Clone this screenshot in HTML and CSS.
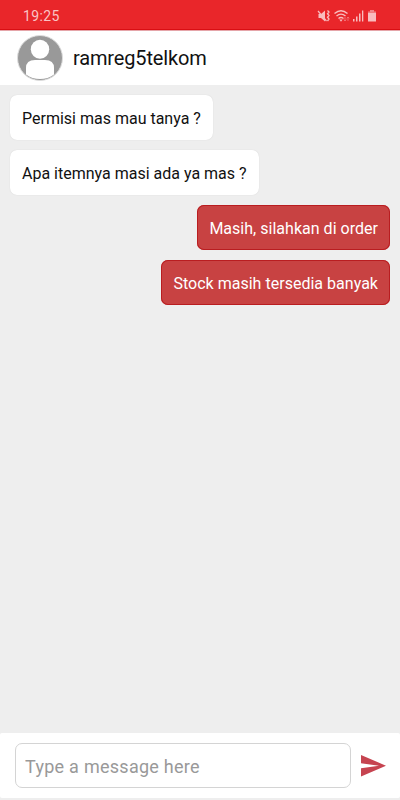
FILE: index.html
```html
<!DOCTYPE html>
<html lang="id">
<head>
  <meta charset="UTF-8">
  <meta name="viewport" content="width=device-width, initial-scale=1.0">
  <title>Chat</title>
  <link rel="stylesheet" href="styles.css">
</head>
<body>
  <div class="status-bar">
    <span class="time">19:25</span>
    <svg class="status-icons" width="62" height="14" viewBox="0 0 62 14" fill="#f9bcbe">
      <!-- muted -->
      <path d="M1.500 5H4l4-3.500v11L4 9H1.500z"/>
      <path d="M1 2l8.500 10" fill="none" stroke="#f9bcbe" stroke-width="1.200"/>
      <path d="M10.500 1.500L12 3l-1.500 1.700L12 6.500l-1.500 1.700L12 10l-1.500 2" fill="none" stroke="#f9bcbe" stroke-width="1.300"/>
      <!-- wifi -->
      <g fill="none" stroke="#f9bcbe" stroke-width="1.400">
        <path d="M17.500 4.500q6.500-5.500 13 0M19.500 7q4.500-3.700 9 0M21.500 9.500q2.500-2 5 0"/>
      </g>
      <path d="M22.300 10.500h3.400L24 12.700z"/>
      <path d="M28 8v4m-1.300-1.300L28 12l1.300-1.300M31 12V8m-1.300 1.300L31 8l1.300 1.300" fill="none" stroke="#f17a7d" stroke-width=".8"/>
      <!-- signal -->
      <path d="M36 10h1.500v2.500H36zM39 7.500h1.500v5H39zM42 4.500h1.500v8H42zM45 1.500h1.300v11H45z"/>
      <!-- battery -->
      <path d="M51 3.500h8v9h-8z"/>
      <path d="M53 1h4v1.500h2v1h-8v-1h2z" fill="#f28588"/>
    </svg>
  </div>

  <header class="chat-header">
    <svg class="avatar" width="46" height="46" viewBox="0 0 46 46">
      <circle cx="23" cy="23" r="22.500" fill="#999" stroke="#ddd"/>
      <ellipse cx="23" cy="14.200" rx="9.200" ry="9.500" fill="#fff"/>
      <path d="M9 39.500V33q0-8 9-8h10q9 0 9 8v6.500q-6 4.500-14 4.500T9 39.500z" fill="#fff"/>
    </svg>
    <h1>ramreg5telkom</h1>
  </header>

  <main class="messages">
    <div class="message">Permisi mas mau tanya ?</div>
    <div class="message">Apa itemnya masi ada ya mas ?</div>
    <div class="message sent">Masih, silahkan di order</div>
    <div class="message sent">Stock masih tersedia banyak</div>
  </main>

  <form class="composer">
    <input type="text" placeholder="Type a message here">
    <button type="button" aria-label="Send">
      <svg width="25" height="22" viewBox="0 0 25 22" fill="#c64450">
        <path d="M0 0l25 10.700L0 21.500v-8.300l18-2.500L0 8.200z"/>
      </svg>
    </button>
  </form>
</body>
</html>
```
FILE: styles.css
```css
* {
  box-sizing: border-box;
}

body {
  display: flex;
  flex-direction: column;
  height: 100vh;
  margin: 0;
  overflow: hidden;
  background: #eee;
  font-family: Roboto, sans-serif;
}

.status-bar {
  display: flex;
  align-items: center;
  justify-content: space-between;
  height: 30px;
  padding: 2px 20px 0 23px;
  background: #e9262a;
  border-bottom: 1px solid #d90e13;
}

.time {
  color: #fac4c5;
  font-size: 14px;
  letter-spacing: 0.4px;
}

.status-icons {
  margin-right: 1px;
}

.chat-header {
  display: flex;
  align-items: center;
  height: 55px;
  padding: 0 17px;
  background: #fff;
  border-top: 1px solid #e5a5a9;
}

.chat-header h1 {
  margin: 0 0 0 10px;
  color: #111;
  font-size: 20px;
  font-weight: 400;
  letter-spacing: -0.15px;
}

.messages {
  display: flex;
  flex: 1;
  flex-direction: column;
  align-items: flex-start;
  gap: 10px;
  padding: 10px;
}

.message {
  height: 45px;
  padding: 0 12px;
  background: #fff;
  border-radius: 7px;
  box-shadow: 0 0 1px #ccc;
  color: #111;
  font-size: 16px;
  line-height: 48px;
  white-space: nowrap;
}

.sent {
  align-self: flex-end;
  background: #c84242;
  box-shadow: inset 0 0 0 1px #b91d20;
  color: #fff;
  letter-spacing: 0.02px;
}

.composer {
  display: flex;
  align-items: center;
  height: 65px;
  margin-bottom: 2px;
  padding: 0 14px 0 15px;
  background: #fff;
  border-radius: 2px;
}

.composer input {
  width: 336px;
  height: 45px;
  padding: 2px 9px 0;
  background: #fff;
  border: 1px solid #d4d4d4;
  border-radius: 7px;
  font-family: inherit;
  font-size: 18px;
  letter-spacing: 0.27px;
}

.composer input::placeholder {
  color: #999;
}

.composer button {
  margin-left: 10px;
  padding: 0;
  background: none;
  border: 0;
}

.composer svg {
  display: block;
}
```
